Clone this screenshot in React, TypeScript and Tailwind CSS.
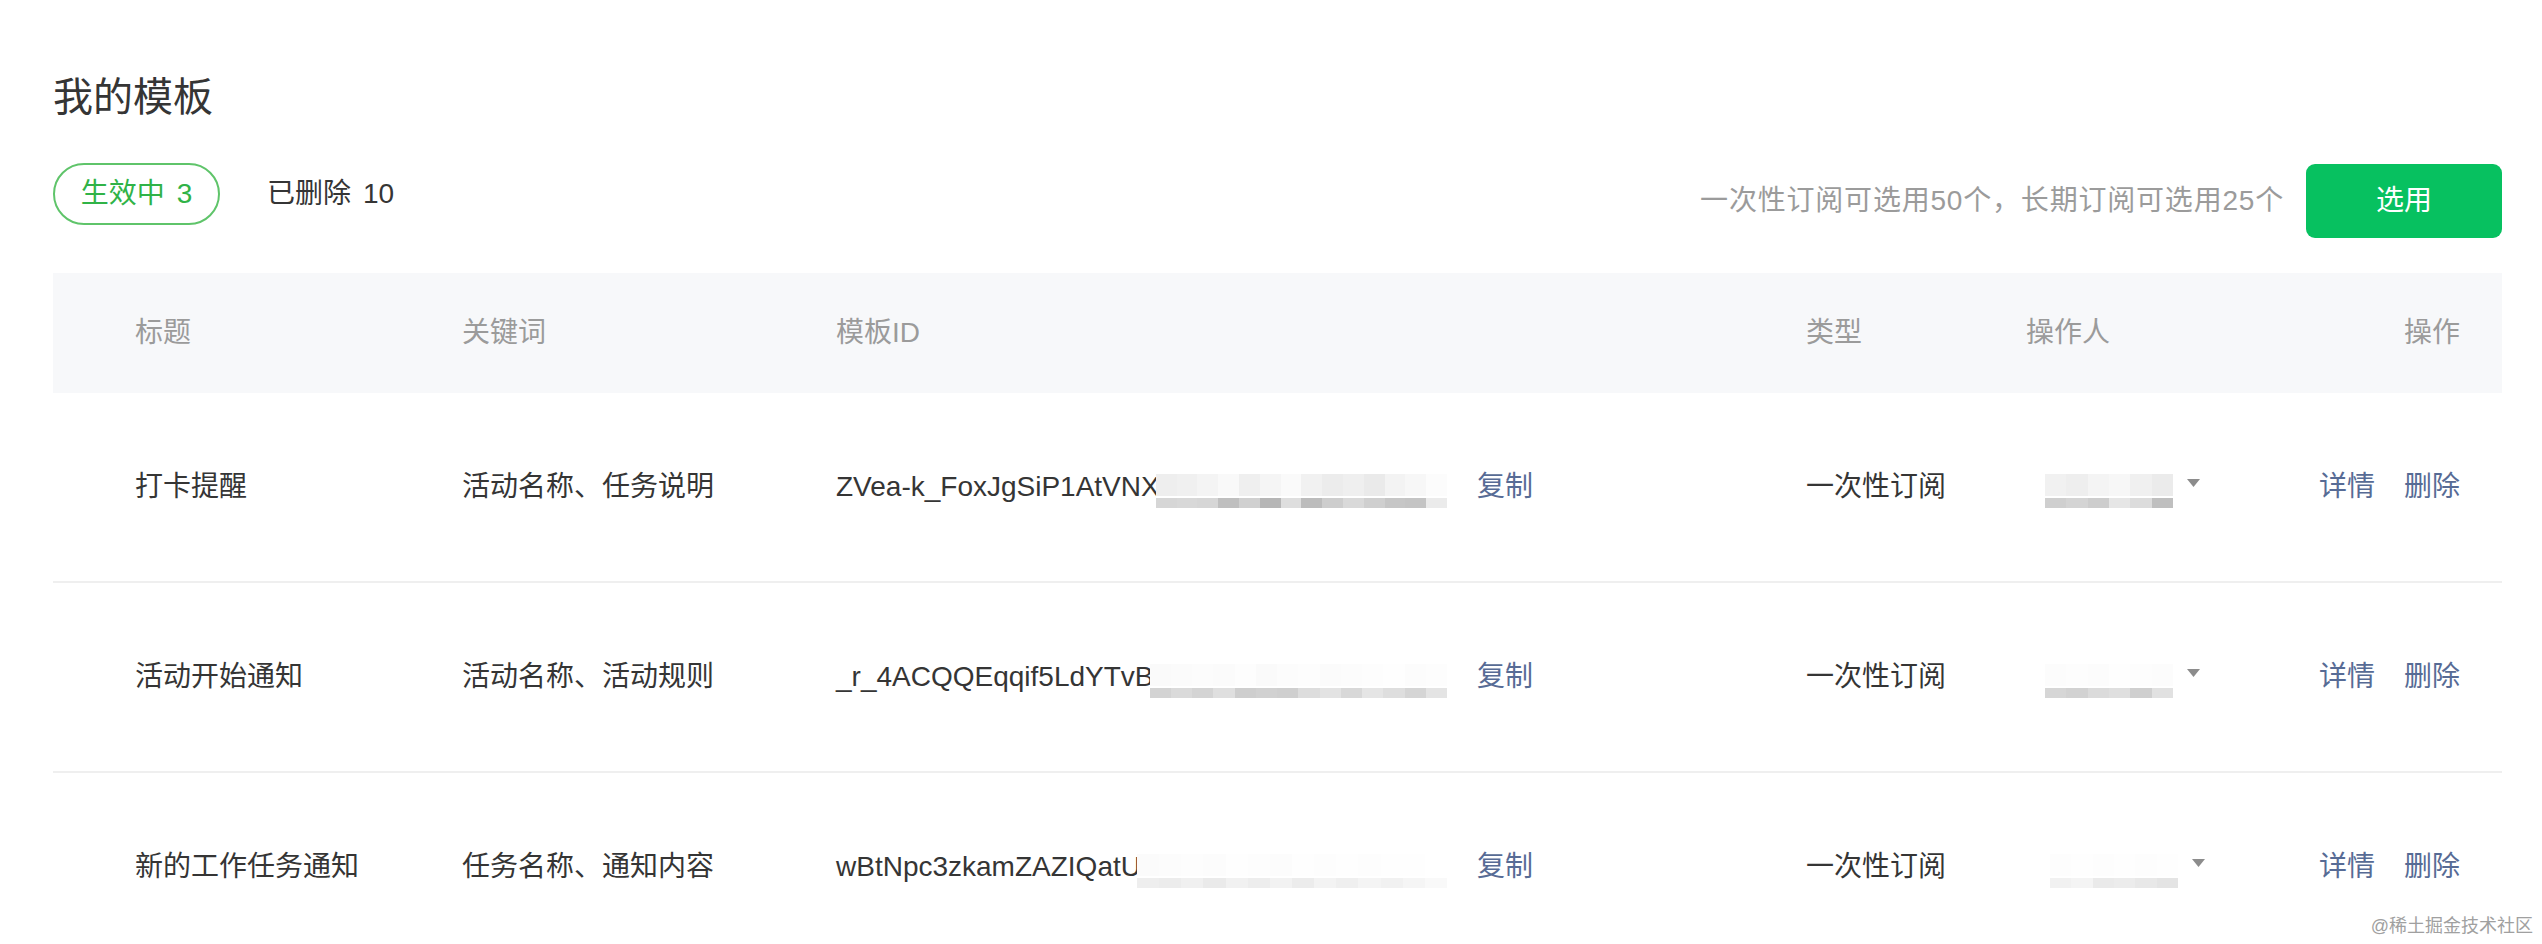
import { ReactNode } from 'react';

type Row = {
  title: string;
  keywords: string;
  id: string;
  idTop: string[];
  idBottom: string[];
  opTop: string[];
  opBottom: string[];
  opShift: string;
};

const rows: Row[] = [
  {
    title: '打卡提醒',
    keywords: '活动名称、任务说明',
    id: 'ZVea-k_FoxJgSiP1AtVNX',
    idTop: ['bg-[#eeeeee]', 'bg-[#f0f0f0]', 'bg-[#f4f4f4]', 'bg-[#f9f9f9]', 'bg-[#efefef]', 'bg-[#f5f5f5]', 'bg-[#fafafa]', 'bg-[#f1f1f1]', 'bg-[#ececec]', 'bg-[#efefef]', 'bg-[#eaeaea]', 'bg-[#f3f3f3]', 'bg-[#f7f7f7]', 'bg-[#fcfcfc]'],
    idBottom: ['bg-[#d6d6d6]', 'bg-[#d8d8d8]', 'bg-[#d6d6d6]', 'bg-[#bfbfbf]', 'bg-[#d0d0d0]', 'bg-[#b6b6b6]', 'bg-[#dedede]', 'bg-[#bcbcbc]', 'bg-[#cdcdcd]', 'bg-[#d9d9d9]', 'bg-[#cfcfcf]', 'bg-[#c6c6c6]', 'bg-[#c4c4c4]', 'bg-[#ebebeb]'],
    opTop: ['bg-[#f1f1f1]', 'bg-[#eeeeee]', 'bg-[#f4f4f4]', 'bg-[#f7f7f7]', 'bg-[#f0f0f0]', 'bg-[#ebebeb]'],
    opBottom: ['bg-[#cfcfcf]', 'bg-[#d4d4d4]', 'bg-[#cdcdcd]', 'bg-[#e6e6e6]', 'bg-[#dcdcdc]', 'bg-[#bfbfbf]'],
    opShift: 'ml-[19px]',
  },
  {
    title: '活动开始通知',
    keywords: '活动名称、活动规则',
    id: '_r_4ACQQEqqif5LdYTvB',
    idTop: ['bg-[#fafafa]', 'bg-[#fbfbfb]', 'bg-[#fcfcfc]', 'bg-[#fbfbfb]', 'bg-[#fdfdfd]', 'bg-[#fafafa]', 'bg-[#fcfcfc]', 'bg-[#fdfdfd]', 'bg-[#fbfbfb]', 'bg-[#fcfcfc]', 'bg-[#fdfdfd]', 'bg-[#fefefe]', 'bg-[#fcfcfc]', 'bg-[#fdfdfd]'],
    idBottom: ['bg-[#d3d3d3]', 'bg-[#dadada]', 'bg-[#d4d4d4]', 'bg-[#dfdfdf]', 'bg-[#cecece]', 'bg-[#d1d1d1]', 'bg-[#cfcfcf]', 'bg-[#dddddd]', 'bg-[#e3e3e3]', 'bg-[#d8d8d8]', 'bg-[#e5e5e5]', 'bg-[#dedede]', 'bg-[#d5d5d5]', 'bg-[#e4e4e4]'],
    opTop: ['bg-[#fcfcfc]', 'bg-[#fdfdfd]', 'bg-[#fcfcfc]', 'bg-[#fefefe]', 'bg-[#fdfdfd]', 'bg-[#fcfcfc]'],
    opBottom: ['bg-[#d6d6d6]', 'bg-[#d2d2d2]', 'bg-[#dbdbdb]', 'bg-[#dfdfdf]', 'bg-[#cfcfcf]', 'bg-[#e1e1e1]'],
    opShift: 'ml-[19px]',
  },
  {
    title: '新的工作任务通知',
    keywords: '任务名称、通知内容',
    id: 'wBtNpc3zkamZAZIQatU',
    idTop: ['bg-[#fbfbfb]', 'bg-[#fcfcfc]', 'bg-[#fdfdfd]', 'bg-[#fcfcfc]', 'bg-[#fefefe]', 'bg-[#fdfdfd]', 'bg-[#fcfcfc]', 'bg-[#fefefe]', 'bg-[#fdfdfd]', 'bg-[#fefefe]', 'bg-[#fdfdfd]', 'bg-[#fefefe]', 'bg-[#fefefe]', 'bg-[#ffffff]'],
    idBottom: ['bg-[#eeeeee]', 'bg-[#ececec]', 'bg-[#f0f0f0]', 'bg-[#eaeaea]', 'bg-[#f1f1f1]', 'bg-[#ededed]', 'bg-[#f2f2f2]', 'bg-[#ececec]', 'bg-[#f3f3f3]', 'bg-[#efefef]', 'bg-[#f4f4f4]', 'bg-[#f1f1f1]', 'bg-[#f5f5f5]', 'bg-[#f9f9f9]'],
    opTop: ['bg-[#fdfdfd]', 'bg-[#fefefe]', 'bg-[#fdfdfd]', 'bg-[#fefefe]', 'bg-[#fdfdfd]', 'bg-[#fefefe]'],
    opBottom: ['bg-[#f1f1f1]', 'bg-[#f4f4f4]', 'bg-[#eaeaea]', 'bg-[#ececec]', 'bg-[#e8e8e8]', 'bg-[#e4e4e4]'],
    opShift: 'ml-[24px]',
  },
];

// pixelated blur that hides part of the data
function Mosaic({ top, bottom, className }: { top: string[]; bottom: string[]; className: string }) {
  return (
    <div className={`flex flex-col gap-[2px] mt-[8px] blur-[0.7px] ${className}`}>
      <div className="flex h-[22px]">
        {top.map((c, i) => (
          <div key={i} className={`flex-1 ${c}`} />
        ))}
      </div>
      <div className="flex h-[10px]">
        {bottom.map((c, i) => (
          <div key={i} className={`flex-1 ${c}`} />
        ))}
      </div>
    </div>
  );
}

function Caret() {
  return (
    <svg width="13" height="8" viewBox="0 0 13 8" className="mb-[8px]">
      <path d="M0 0h13L6.5 8z" fill="#8c8c8c" />
    </svg>
  );
}

function Cell({ children, className = '' }: { children: ReactNode; className?: string }) {
  return <div className={`flex items-center ${className}`}>{children}</div>;
}

export default function App() {
  return (
    <div className="relative h-[944px] overflow-hidden bg-white pl-[53px] pr-[40px] text-[#353535] [font-family:'Liberation_Sans','Noto_Sans_CJK_SC',sans-serif]">
      <h1 className="pt-[69px] text-[40px] leading-[56px] font-normal">我的模板</h1>

      <div className="mt-[38px] flex items-start justify-between">
        <div className="flex items-center">
          <div className="flex h-[62px] w-[167px] items-center justify-center rounded-full border-2 border-[#5fc46a] text-[28px] text-[#30b347]">
            生效中<span className="ml-[12px]">3</span>
          </div>
          <div className="ml-[47px] text-[28px]">
            已删除<span className="ml-[12px]">10</span>
          </div>
        </div>
        <div className="mt-[1px] flex items-center">
          <span className="text-[28px] tracking-[0.8px] text-[#9b9b9b]">一次性订阅可选用50个，长期订阅可选用25个</span>
          <button className="ml-[22px] h-[74px] w-[196px] rounded-[9px] bg-[#07c160] text-[28px] text-white">选用</button>
        </div>
      </div>

      <div className="mt-[35px]">
        <div className="grid h-[120px] grid-cols-[327px_374px_970px_220px_1fr_auto] items-center bg-[#f7f8fa] pl-[82px] pr-[42px] text-[28px] text-[#9b9b9b]">
          <div>标题</div>
          <div>关键词</div>
          <div>模板ID</div>
          <div>类型</div>
          <div>操作人</div>
          <div className="text-right">操作</div>
        </div>

        {rows.map((row) => (
          <div
            key={row.id}
            className="grid h-[190px] grid-cols-[327px_374px_970px_220px_1fr_auto] items-center border-b-2 border-[#efefef] pl-[82px] pr-[42px] text-[28px]"
          >
            <Cell>{row.title}</Cell>
            <Cell>{row.keywords}</Cell>
            <Cell>
              <div className="flex w-[611px] items-center">
                <span className="shrink-0">{row.id}</span>
                <Mosaic top={row.idTop} bottom={row.idBottom} className="-ml-[4px] flex-1" />
              </div>
              <span className="ml-[30px] text-[#576b95]">复制</span>
            </Cell>
            <Cell>一次性订阅</Cell>
            <Cell>
              <Mosaic top={row.opTop} bottom={row.opBottom} className={`w-[128px] ${row.opShift}`} />
              <span className="ml-[14px]">
                <Caret />
              </span>
            </Cell>
            <Cell className="justify-end text-[#576b95]">
              <span>详情</span>
              <span className="ml-[29px]">删除</span>
            </Cell>
          </div>
        ))}
      </div>

      <div className="absolute bottom-[4px] right-[9px] text-[18px] text-[#a0a0a0] [text-shadow:0_0_2px_#fff]">
        @稀土掘金技术社区
      </div>
    </div>
  );
}
